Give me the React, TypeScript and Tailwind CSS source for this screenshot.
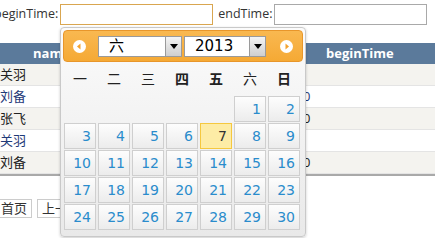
import React from "react";

const font = { fontFamily: '"Open Sans", "Noto Sans CJK SC", sans-serif' };

function Arrow({ dir }: { dir: "left" | "right" }) {
  return (
    <svg width="13" height="13" viewBox="0 0 13 13">
      <circle cx="6.5" cy="6.5" r="6.5" fill="#ffffff" />
      {dir === "left" ? (
        <polygon points="4,6.5 7.5,3.5 7.5,9.5" fill="#f4a32f" />
      ) : (
        <polygon points="9,6.5 5.5,3.5 5.5,9.5" fill="#f4a32f" />
      )}
    </svg>
  );
}

function Select({ value, w }: { value: string; w: string }) {
  return (
    <div className={`flex h-[21px] ${w} border border-[#9a9a9a] bg-white items-stretch`}>
      <div className="flex-1 pl-[10px] flex items-center text-[15px] text-black leading-none" style={{ fontFamily: '"DejaVu Sans", "Noto Sans CJK SC", sans-serif' }}>
        {value}
      </div>
      <div className="w-[16px] border-l border-[#9a9a9a] bg-gradient-to-b from-[#f4f4f4] to-[#cfcfcf] flex items-center justify-center">
        <svg width="8" height="5" viewBox="0 0 8 5">
          <polygon points="0,0 8,0 4,5" fill="#000" />
        </svg>
      </div>
    </div>
  );
}

const rows = [
  { name: "关羽", bg: "bg-[#f4f3ef]", color: "text-[#222]", tail: "" },
  { name: "刘备", bg: "bg-white", color: "text-[#1f3a78]", tail: "0" },
  { name: "张飞", bg: "bg-[#f4f3ef]", color: "text-[#222]", tail: "0" },
  { name: "关羽", bg: "bg-white", color: "text-[#1f3a78]", tail: "" },
  { name: "刘备", bg: "bg-[#f4f3ef]", color: "text-[#222]", tail: "0" },
];

const weekdays = ["一", "二", "三", "四", "五", "六", "日"];
const boldDays = [false, false, false, true, true, false, true];

export default function App() {
  const cells: (number | null)[] = [null, null, null, null, null];
  for (let i = 1; i <= 30; i++) cells.push(i);

  return (
    <div className="relative w-[435px] h-[238px] overflow-hidden bg-white text-[13px] text-[#333]" style={font}>
      {/* top form */}
      <div className="flex items-center h-[21px] mt-[4px] ml-[-6px]">
        <span className="mr-[2px] text-[12.5px]">beginTime:</span>
        <div className="w-[153px] h-[21px] border border-[#d9a650] bg-white" />
        <span className="ml-[5px] mr-[2px] text-[12.5px]">endTime:</span>
        <div className="w-[153px] h-[21px] border border-[#a9a9a9] bg-white" />
      </div>

      {/* table */}
      <div className="mt-[18px]">
        <div className="flex h-[21px] bg-[#5b7a9b] text-white font-bold items-center">
          <div className="w-[130px] pl-[33px]">name</div>
          <div className="flex-1 pl-[196px]">beginTime</div>
        </div>
        {rows.map((r, i) => (
          <div key={i} className={`flex h-[22px] items-center border-b border-[#e4e4e4] ${r.bg} ${r.color}`}>
            <div className="w-[130px] pl-0">{r.name}</div>
            <div className="pl-[173px]">{r.tail}</div>
          </div>
        ))}
        <div className="h-[2px] bg-[#a9a9a9]" />
      </div>

      {/* pager */}
      <div className="flex gap-[5px] mt-[23px] ml-[-4px]">
        <div className="h-[19px] px-[4px] border border-[#cccccc] flex items-center">首页</div>
        <div className="h-[19px] px-[4px] border border-[#cccccc] flex items-center">上一页</div>
      </div>

      {/* date picker popup */}
      <div className="absolute left-[60px] top-[27px] w-[246px] h-[210px] rounded-[4px] border border-[#c9c9c9] bg-gradient-to-b from-[#fbfbfb] to-[#e9e9e9] shadow-[0_1px_3px_rgba(0,0,0,0.2)] pt-[2px] pl-[2px] pr-[2px]">
        <div className="h-[32px] w-[240px] rounded-[4px] border border-[#e8962a] bg-gradient-to-b from-[#f9b850] to-[#f5a934] flex items-center pl-[9px]">
          <Arrow dir="left" />
          <div className="ml-[12px]">
            <Select value="六" w="w-[84px]" />
          </div>
          <div className="ml-[2px]">
            <Select value="2013" w="w-[82px]" />
          </div>
          <div className="ml-[14px]">
            <Arrow dir="right" />
          </div>
        </div>

        <div className="grid grid-cols-[repeat(7,32px)] gap-x-[2px] pl-[1px] h-[32px] items-center" style={{ fontFamily: '"Noto Sans CJK SC", sans-serif' }}>
          {weekdays.map((w, i) => (
            <div key={i} className={`text-center text-[14px] text-[#222] ${boldDays[i] ? "font-bold" : ""}`}>
              {w}
            </div>
          ))}
        </div>

        <div className="grid grid-cols-[repeat(7,32px)] auto-rows-[26px] gap-x-[2px] gap-y-[1px] pl-[1px] mt-[2px]" style={{ fontFamily: '"DejaVu Sans", sans-serif' }}>
          {cells.map((d, i) =>
            d === null ? (
              <div key={i} />
            ) : d === 7 ? (
              <div key={i} className="border border-[#f5c83f] bg-[#fdeca6] text-[#333] text-[14px] pr-[4px] flex items-center justify-end">
                {d}
              </div>
            ) : (
              <div key={i} className="border border-[#cfcfcf] bg-gradient-to-b from-[#fdfdfd] to-[#ececec] text-[#2a8ccc] text-[14px] pr-[4px] flex items-center justify-end">
                {d}
              </div>
            )
          )}
        </div>
      </div>
    </div>
  );
}
